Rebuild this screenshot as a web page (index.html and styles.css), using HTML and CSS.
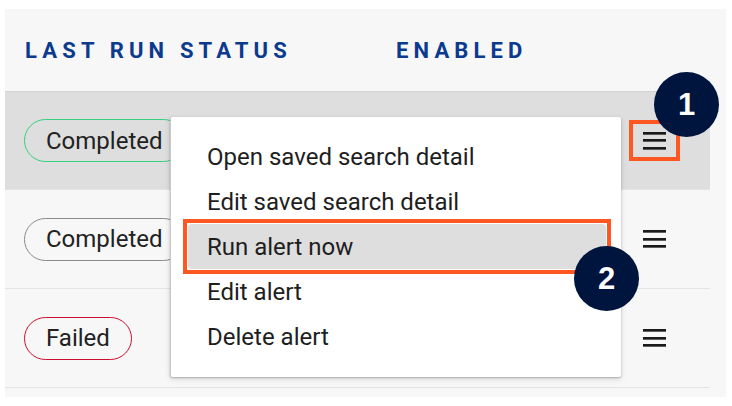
FILE: index.html
```html
<!DOCTYPE html>
<html lang="en">
<head>
<meta charset="utf-8">
<title>Saved search alerts</title>
<link rel="stylesheet" href="styles.css">
</head>
<body>
<div class="panel">
  <div class="header">
    <div class="col-status">LAST RUN STATUS</div>
    <div class="col-enabled">ENABLED</div>
  </div>
  <div class="rows">
    <div class="row active">
      <div class="cell-status"><span class="pill pill-green">Completed</span></div>
      <div class="cell-action"><button class="menu-btn marked" aria-label="Actions"><span class="bars"></span></button></div>
    </div>
    <div class="row">
      <div class="cell-status"><span class="pill pill-grey">Completed</span></div>
      <div class="cell-action"><button class="menu-btn" aria-label="Actions"><span class="bars"></span></button></div>
    </div>
    <div class="row">
      <div class="cell-status"><span class="pill pill-red">Failed</span></div>
      <div class="cell-action"><button class="menu-btn" aria-label="Actions"><span class="bars"></span></button></div>
    </div>
  </div>

  <ul class="menu">
    <li class="menu-item">Open saved search detail</li>
    <li class="menu-item">Edit saved search detail</li>
    <li class="menu-item hover marked-item">Run alert now</li>
    <li class="menu-item">Edit alert</li>
    <li class="menu-item">Delete alert</li>
  </ul>

  <div class="badge badge-1">1</div>
  <div class="badge badge-2">2</div>
</div>
</body>
</html>
```

FILE: styles.css
```css
* { box-sizing: border-box; }

html, body {
  margin: 0;
  padding: 0;
  background: #ffffff;
}

body {
  font-family: Roboto, "Liberation Sans", Arial, sans-serif;
  color: #222222;
  padding: 9px 6px 9px 5px;
}

.panel {
  position: relative;
  background: #f7f7f7;
  height: 388px;
  padding-bottom: 9px;
}

.header {
  height: 82px;
  display: flex;
  align-items: center;
  padding-left: 20px;
  font-weight: 700;
  font-size: 22px;
  letter-spacing: 5.15px;
  color: #0b3a8e;
}

.col-status { width: 371px; }

.rows {
  width: 705px;
  border-top: 1px solid #d4d4d4;
}

.row {
  height: 99px;
  display: flex;
  align-items: center;
  border-bottom: 1px solid #e4e4e4;
  padding-left: 19px;
}

.row.active {
  background: #dedede;
  height: 98px;
}

.cell-status { flex: 1; }

.cell-action {
  width: 85px;
  display: flex;
  align-items: center;
}

.pill {
  display: inline-flex;
  align-items: center;
  height: 43px;
  padding: 0 21px;
  border-radius: 22px;
  border: 1.5px solid #888888;
  font-size: 24px;
  color: #222222;
  background: transparent;
}

.pill-green { border-color: #34d07a; }
.pill-grey { border-color: #8a8a8a; }
.pill-red { border-color: #c8102e; }

.menu-btn {
  width: 43px;
  height: 33px;
  padding: 0;
  margin: 0 0 0 8px;
  border: none;
  background: transparent;
  display: flex;
  align-items: center;
  justify-content: center;
}

.menu-btn.marked {
  outline: 4px solid #ff5722;
  outline-offset: 0;
}

.bars {
  display: block;
  width: 23px;
  height: 18px;
  background: linear-gradient(#1a1a1a, #1a1a1a) 0 0 / 100% 2.7px no-repeat,
              linear-gradient(#1a1a1a, #1a1a1a) 0 7.7px / 100% 2.7px no-repeat,
              linear-gradient(#1a1a1a, #1a1a1a) 0 15.3px / 100% 2.7px no-repeat;
}

.menu {
  position: absolute;
  left: 165px;
  top: 108px;
  width: 451px;
  height: 260px;
  margin: 0;
  padding: 17px 15px 17px 17px;
  list-style: none;
  background: #ffffff;
  border-left: 1px solid #c9c9c9;
  border-radius: 2px;
  box-shadow: 0 1px 2px rgba(0,0,0,0.25), 0 2px 6px rgba(0,0,0,0.12);
}

.menu-item {
  position: relative;
  height: 45px;
  display: flex;
  align-items: center;
  padding-left: 19px;
  font-size: 24px;
  color: #1e1e1e;
  border-radius: 4px;
}

.menu-item.hover {
  background: #dedede;
}

.menu-item.marked-item::after {
  content: "";
  position: absolute;
  left: -5px;
  right: -5px;
  top: -5px;
  bottom: -5px;
  border: 4px solid #ff5722;
  pointer-events: none;
}

.badge {
  position: absolute;
  width: 65px;
  height: 65px;
  border-radius: 50%;
  background: #00153d;
  color: #ffffff;
  font-family: "Liberation Sans", Arial, sans-serif;
  font-weight: 700;
  font-size: 31px;
  display: flex;
  align-items: center;
  justify-content: center;
}

.badge-1 { left: 649px; top: 63px; }
.badge-2 { left: 569px; top: 237px; }
```
